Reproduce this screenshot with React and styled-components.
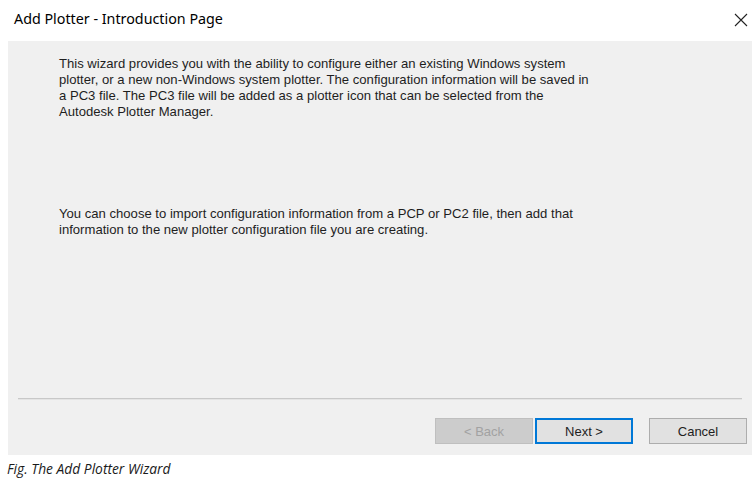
import React from "react";
import styled, { createGlobalStyle } from "styled-components";

const GlobalStyle = createGlobalStyle`
  html, body {
    margin: 0;
    padding: 0;
    background: #ffffff;
  }
`;

const Page = styled.div`
  width: 753px;
  height: 486px;
  background: #ffffff;
  display: flex;
  flex-direction: column;
`;

const TitleBar = styled.div`
  height: 41px;
  display: flex;
  align-items: center;
  justify-content: space-between;
  padding: 0 5px 0 14px;
  box-sizing: border-box;
`;

const Title = styled.div`
  font-family: "Noto Sans", "Open Sans", sans-serif;
  font-size: 14.3px;
  color: #000;
  margin-top: -4px;
`;

const CloseIcon = styled.svg`
  width: 14px;
  height: 14px;
  margin-top: -2px;
`;

const Panel = styled.div`
  margin-left: 8px;
  width: 744px;
  height: 414px;
  background: #f0f0f0;
  display: flex;
  flex-direction: column;
  box-sizing: border-box;
  padding-bottom: 11px;
`;

const Body = styled.div`
  flex: 1;
  padding: 15px 0 0 51px;
`;

const Para = styled.p`
  margin: 0 0 ${(p) => p.gap || 0}px 0;
  font-family: "Liberation Sans", Arial, sans-serif;
  font-size: 13.1px;
  line-height: 16px;
  color: #1e1e1e;
  white-space: nowrap;
`;

const Separator = styled.div`
  margin: 0 10px 18px 10px;
  height: 2px;
  border-top: 1px solid #c8c8c8;
  border-bottom: 1px solid #e4e4e4;
  box-sizing: border-box;
`;

const ButtonRow = styled.div`
  display: flex;
  justify-content: flex-end;
  padding-right: 5px;
`;

const Button = styled.button`
  width: 98px;
  height: 26px;
  margin-left: ${(p) => p.$space || 0}px;
  box-sizing: border-box;
  font-family: "Liberation Sans", Arial, sans-serif;
  font-size: 13px;
  padding: 0;
  color: ${(p) => (p.disabled ? "#a2a2a2" : "#1e1e1e")};
  background: ${(p) => (p.disabled ? "#cccccc" : "#e1e1e1")};
  border: ${(p) =>
    p.$primary
      ? "2px solid #0078d7"
      : p.disabled
      ? "1px solid #bfbfbf"
      : "1px solid #adadad"};
`;

const Caption = styled.div`
  font-family: "Open Sans", "Noto Sans", sans-serif;
  font-style: italic;
  font-size: 13.8px;
  line-height: 18px;
  color: #1a1a1a;
  padding: 5px 0 0 7px;
`;

export default function App() {
  return (
    <>
      <GlobalStyle />
      <Page>
        <TitleBar>
          <Title>Add Plotter - Introduction Page</Title>
          <CloseIcon viewBox="0 0 14 14">
            <path d="M1 1 L13 13 M13 1 L1 13" stroke="#222" strokeWidth="1.1" fill="none" />
          </CloseIcon>
        </TitleBar>
        <Panel>
          <Body>
            <Para gap={86}>
              This wizard provides you with the ability to configure either an existing Windows system
              <br />
              plotter, or a new non-Windows system plotter. The configuration information will be saved in
              <br />
              a PC3 file. The PC3 file will be added as a plotter icon that can be selected from the
              <br />
              Autodesk Plotter Manager.
            </Para>
            <Para>
              You can choose to import configuration information from a PCP or PC2 file, then add that
              <br />
              information to the new plotter configuration file you are creating.
            </Para>
          </Body>
          <Separator />
          <ButtonRow>
            <Button disabled>&lt; Back</Button>
            <Button $primary $space={2}>Next &gt;</Button>
            <Button $space={16}>Cancel</Button>
          </ButtonRow>
        </Panel>
        <Caption>Fig. The Add Plotter Wizard</Caption>
      </Page>
    </>
  );
}
